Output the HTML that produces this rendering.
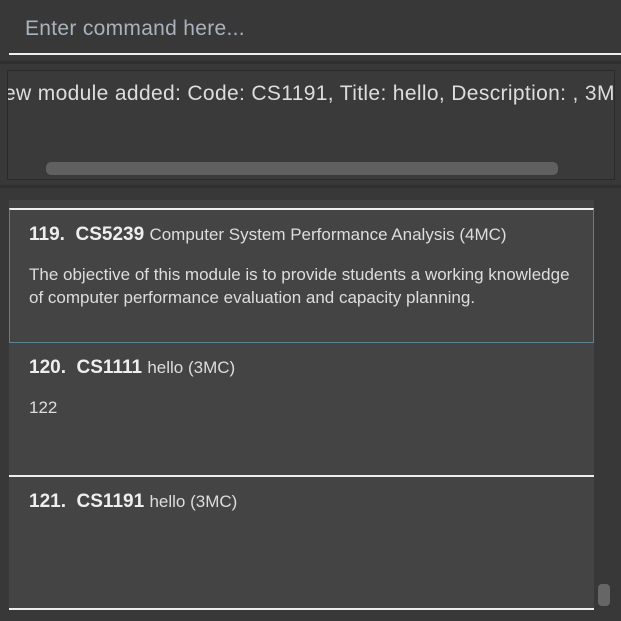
<!DOCTYPE html>
<html><head><style>
body{margin:0;width:621px;height:621px;background:#383838;position:relative;overflow:hidden;font-family:"Liberation Sans",sans-serif}
div{position:absolute;box-sizing:border-box}
.t{white-space:nowrap}
.card{left:9px;width:585px;background:#444}
.h{left:20px;top:14px;color:#eee;font-size:19px;font-weight:bold}
.h span{font-weight:normal;font-size:17px;color:#ddd}
.d{left:19px;color:#ddd;font-size:17px;line-height:23px}
</style></head><body>
<div class="t" style="left:25px;top:17px;color:#a9b2bd;font-size:21px;letter-spacing:0.3px">Enter command here...</div>
<div style="left:9px;top:53px;width:612px;height:2px;background:#eee"></div>
<div style="left:0;top:61px;width:621px;height:3px;background:#2f2f2f"></div>
<div style="left:7px;top:70px;width:608px;height:110px;border:1px solid #2a2a2a;background:#3a3a3a;overflow:hidden">
<div class="t" style="left:-4px;top:11px;color:#ddd;font-size:21px;letter-spacing:0.35px">ew module added: Code: CS1191, Title: hello, Description: , 3MC</div>
<div style="left:38px;top:91px;width:512px;height:13px;border-radius:5px;background:#606060"></div>
</div>
<div style="left:0;top:185px;width:621px;height:3px;background:#2f2f2f"></div>
<div class="card" style="top:200px;height:9px;background:#424242"></div>
<div class="card" style="top:208px;height:135px;border:1px solid #3d8fa6;border-top:2px solid #eee">
<div class="t h" style="top:14px;left:19px">119.&nbsp; CS5239 <span>Computer System Performance Analysis (4MC)</span></div>
<div class="d" style="top:53px">The objective of this module is to provide students a working knowledge<br>of computer performance evaluation and capacity planning.</div>
</div>
<div class="card" style="top:343px;height:134px;border-bottom:2px solid #eee">
<div class="t h">120.&nbsp; CS1111 <span>hello (3MC)</span></div>
<div class="d" style="top:53px;left:20px">122</div>
</div>
<div class="card" style="top:477px;height:133px;border-bottom:2px solid #eee">
<div class="t h">121.&nbsp; CS1191 <span>hello (3MC)</span></div>
</div>
<div style="left:598px;top:584px;width:12px;height:22px;border-radius:4px;background:#666"></div>
</body></html>
